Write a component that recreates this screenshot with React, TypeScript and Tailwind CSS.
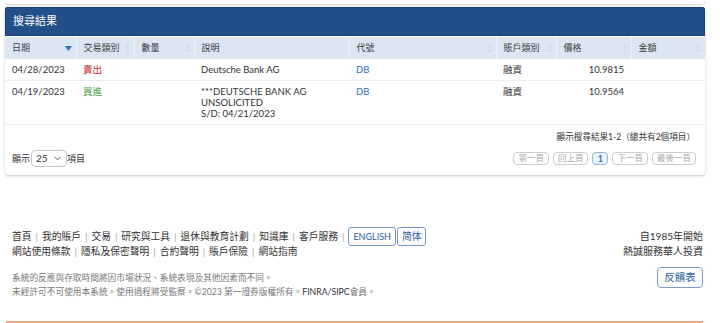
import React from "react"

const font = "font-['Lato','Noto_Sans_CJK_TC',sans-serif]"

const cols = [
  { label: "日期", w: 71, active: true },
  { label: "交易類別", w: 58 },
  { label: "數量", w: 60 },
  { label: "說明", w: 155, plain: true },
  { label: "代號", w: 147 },
  { label: "賬戶類別", w: 60 },
  { label: "價格", w: 75 },
  { label: "金額", w: 74 },
]

const rows = [
  {
    date: "04/28/2023",
    side: "賣出",
    sideColor: "text-[#c62b2b]",
    desc: ["Deutsche Bank AG"],
    sym: "DB",
    acct: "融資",
    price: "10.9815",
  },
  {
    date: "04/19/2023",
    side: "買進",
    sideColor: "text-[#3c9c3c]",
    desc: ["***DEUTSCHE BANK AG", "UNSOLICITED", "S/D: 04/21/2023"],
    sym: "DB",
    acct: "融資",
    price: "10.9564",
  },
]

function SortIcon({ active }: { active?: boolean }) {
  if (active) {
    return (
      <svg width="7" height="5" viewBox="0 0 7 5">
        <path d="M0 0h7L3.5 5z" fill="#2f6fc0" />
      </svg>
    )
  }
  return (
    <svg width="5" height="9" viewBox="0 0 5 9">
      <path d="M2.5 0L5 3.5H0z" fill="#d3d9e2" />
      <path d="M0 5.5h5L2.5 9z" fill="#d3d9e2" />
    </svg>
  )
}

const links1 = ["首頁", "我的賬戶", "交易", "研究與工具", "退休與教育計劃", "知識庫", "客戶服務"]
const links2 = ["網站使用條款", "隱私及保密聲明", "合約聲明", "賬戶保險", "網站指南"]

function Sep() {
  return <span className="px-[4px] text-[#aaa]">|</span>
}

export default function App() {
  return (
    <div className={`w-[720px] h-[323px] overflow-hidden bg-white ${font}`}>
      {/* bottom of the search card above */}
      <div className="ml-[5px] w-[700px] h-[4px] bg-white rounded-b-[3px] shadow-[0_1px_2px_rgba(0,0,0,0.18)]" />

      <div className="ml-[5px] mt-[3px] w-[700px] bg-white rounded-[3px] overflow-hidden shadow-[0_1px_3px_rgba(0,0,0,0.22)]">
        <div className="h-[29px] bg-[#224e8a] border border-[#1a4078] flex items-center pl-[7px] text-white text-[11px]">
          搜尋結果
        </div>
        <table className="w-full table-fixed border-collapse mt-[1px]">
          <colgroup>
            {cols.map((c) => (
              <col key={c.label} style={{ width: c.w }} />
            ))}
          </colgroup>
          <thead>
            <tr className="bg-[#dce6f2]">
              {cols.map((c, i) => (
                <th
                  key={c.label}
                  className={`h-[22px] pl-[7px] pr-[4px] text-left font-normal text-[9px] text-[#3a3a3a] ${
                    i < cols.length - 1 ? "border-r border-[#eef3f9]" : ""
                  }`}
                >
                  <div className="flex items-center justify-between">
                    <span>{c.label}</span>
                    {!c.plain && <SortIcon active={c.active} />}
                  </div>
                </th>
              ))}
            </tr>
          </thead>
          <tbody>
            {rows.map((r) => (
              <tr key={r.date} className="border-b border-[#ececec] text-[9.5px] leading-[11px] text-[#333]">
                <td className="px-[7px] py-[5px] align-top">{r.date}</td>
                <td className={`px-[7px] py-[5px] align-top ${r.sideColor}`}>{r.side}</td>
                <td className="px-[7px] py-[5px] align-top"></td>
                <td className="px-[7px] py-[5px] align-top">
                  {r.desc.map((d) => (
                    <div key={d}>{d}</div>
                  ))}
                </td>
                <td className="px-[7px] py-[5px] align-top text-[#2a6ebb]">{r.sym}</td>
                <td className="px-[7px] py-[5px] align-top">{r.acct}</td>
                <td className="px-[7px] py-[5px] align-top text-right">{r.price}</td>
                <td className="px-[7px] py-[5px] align-top"></td>
              </tr>
            ))}
          </tbody>
        </table>

        <div className="pl-[7px] pr-[9px] pt-[6px] pb-[7px]">
          <div className="text-right pr-[1px] text-[8.6px] leading-[12px] text-[#333]">
            顯示搜尋結果1-2（總共有2個項目）
          </div>
          <div className="mt-[6px] h-[19px] flex items-center justify-between text-[9px] text-[#333]">
            <div className="flex items-center">
              <span>顯示</span>
              <div className="ml-[1px] w-[36px] h-[17px] border border-[#c8c8c8] rounded-[4px] flex items-center justify-between pl-[4px] pr-[5px] text-[10px]">
                <span>25</span>
                <svg width="7" height="5" viewBox="0 0 7 5">
                  <path d="M0.5 0.8L3.5 3.8L6.5 0.8" stroke="#555" strokeWidth="1" fill="none" />
                </svg>
              </div>
              <span>項目</span>
            </div>
            <div className="flex items-center gap-[4px] text-[8.5px] leading-none">
              {["第一頁", "回上頁"].map((t) => (
                <span key={t} className="h-[13px] px-[4px] flex items-center border border-[#ccc] rounded-[4px] text-[#aaa]">
                  {t}
                </span>
              ))}
              <span className="h-[13px] w-[16px] flex items-center justify-center border border-[#8fb2de] bg-[#eef4fb] rounded-[4px] text-[#2a6ebb] font-bold text-[9px]">
                1
              </span>
              {["下一頁", "最後一頁"].map((t) => (
                <span key={t} className="h-[13px] px-[4px] flex items-center border border-[#ccc] rounded-[4px] text-[#aaa]">
                  {t}
                </span>
              ))}
            </div>
          </div>
        </div>
      </div>

      <div className="mt-[54px] pl-[12px] pr-[17px] flex justify-between items-start">
        <div>
          <div className="h-[15px] flex items-center text-[9.75px] text-[#333] whitespace-nowrap">
            {links1.map((l) => (
              <React.Fragment key={l}>
                <span>{l}</span>
                <Sep />
              </React.Fragment>
            ))}
            <span className="h-[19px] px-[4px] flex items-center border border-[#7495c8] rounded-[3px] text-[9px] text-[#2a5d9f]">
              ENGLISH
            </span>
            <span className="ml-[1px] h-[19px] px-[4px] flex items-center border border-[#7495c8] rounded-[3px] text-[9.75px] text-[#2a5d9f]">
              简体
            </span>
          </div>
          <div className="h-[15px] flex items-center text-[9.75px] text-[#333] whitespace-nowrap">
            {links2.map((l, i) => (
              <React.Fragment key={l}>
                <span>{l}</span>
                {i < links2.length - 1 && <Sep />}
              </React.Fragment>
            ))}
          </div>
          <div className="mt-[12px] text-[8.7px] leading-[14px] text-[#777] whitespace-nowrap">
            <div>系統的反應與存取時間將因市場狀況、系統表現及其他因素而不同。</div>
            <div>
              未經許可不可使用本系統。使用過程將受監察。©2023 第一證券版權所有。
              <span className="text-[#333]">FINRA/SIPC</span>會員。
            </div>
          </div>
        </div>
        <div className="flex flex-col items-end text-[10px] leading-[15px] text-[#333]">
          <div>自1985年開始</div>
          <div>熱誠服務華人投資</div>
          <div className="mt-[8px] h-[21px] w-[46px] flex items-center justify-center border border-[#7d9cc9] rounded-[4px] text-[10.5px] text-[#2a5d9f]">
            反饋表
          </div>
        </div>
      </div>

      <div className="ml-[6px] mt-[22px] w-[697px] h-[2px] bg-[#f3a884]" />
    </div>
  )
}
